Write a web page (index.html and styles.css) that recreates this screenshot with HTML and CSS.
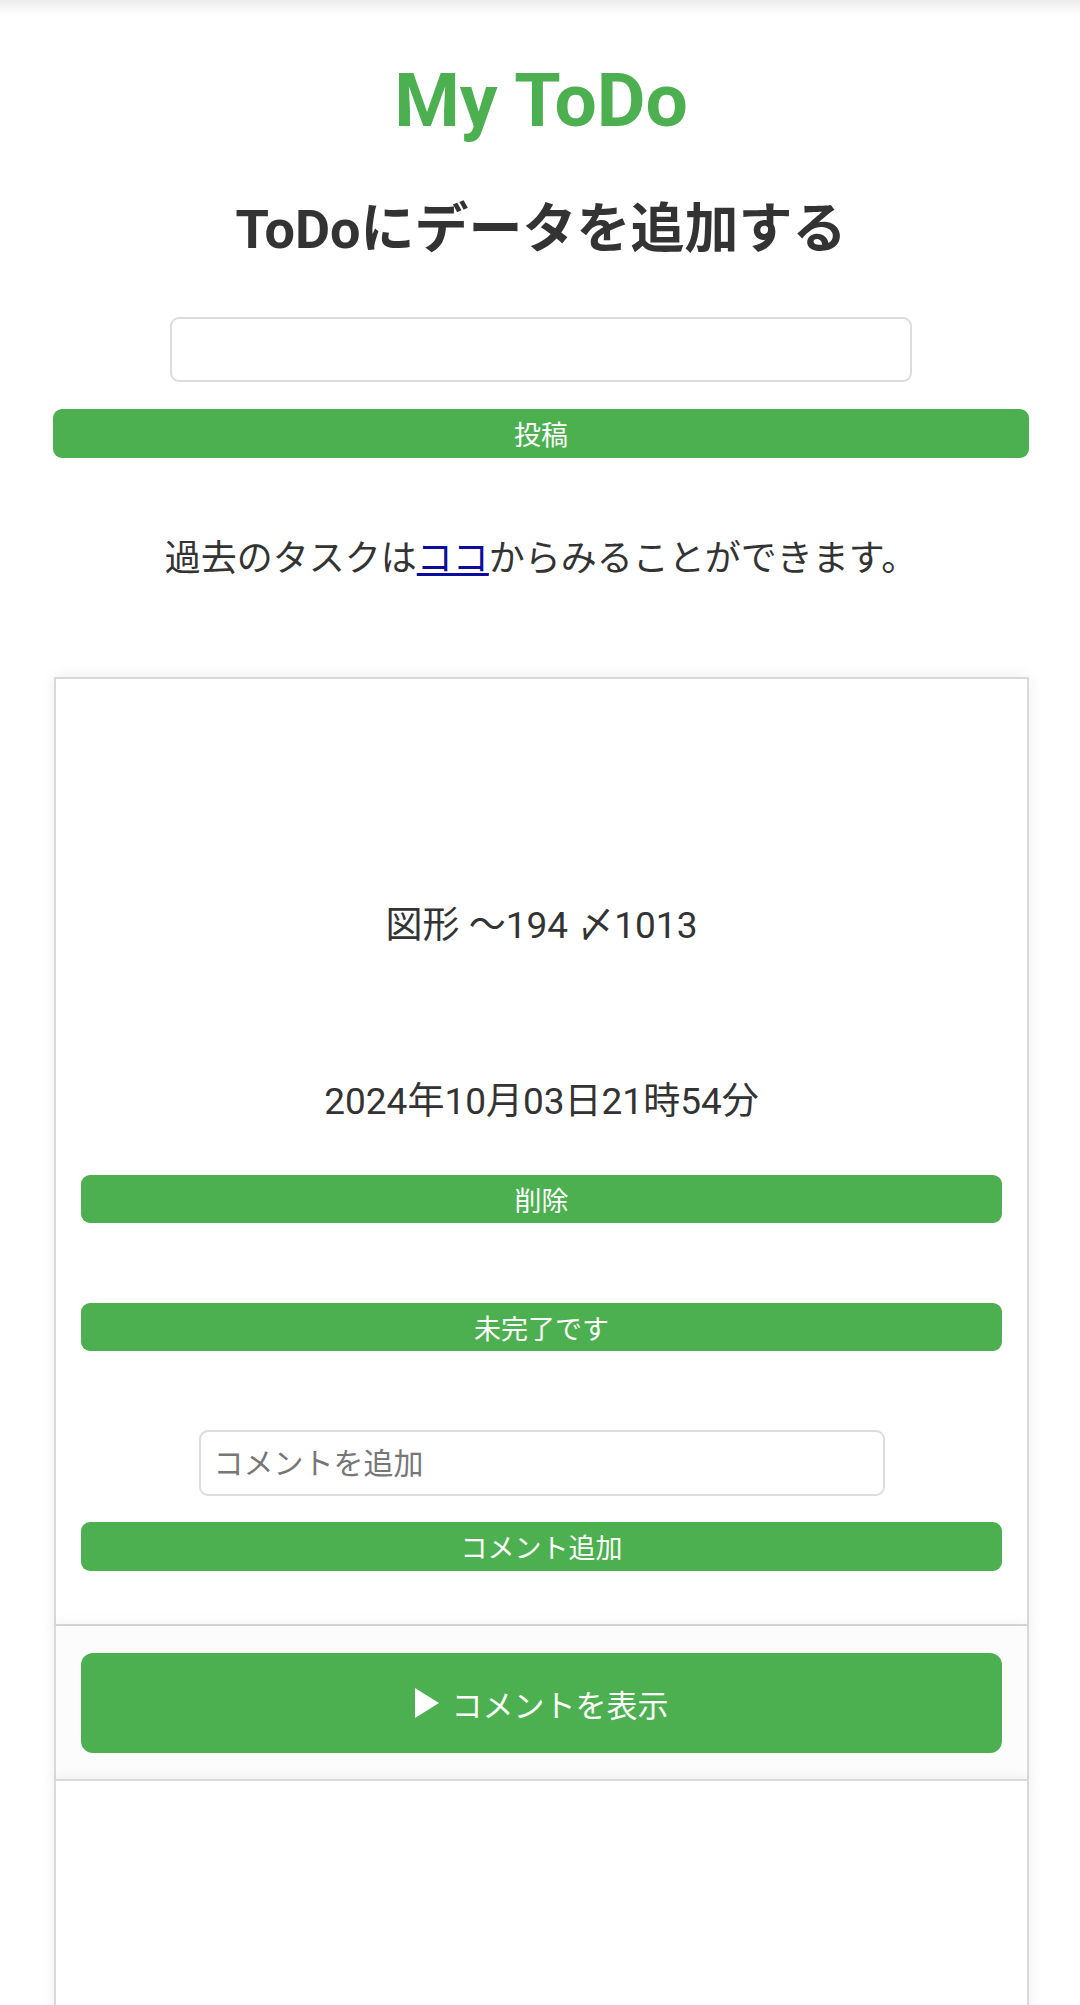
FILE: index.html
```html
<!DOCTYPE html>
<html lang="ja">
<head>
<meta charset="utf-8">
<title>My ToDo</title>
<link rel="stylesheet" href="styles.css">
</head>
<body>
<div class="top-shade"></div>
<main class="page">
  <h1 class="title">My ToDo</h1>
  <h2 class="subtitle">ToDoにデータを追加する</h2>
  <form class="add-form">
    <input class="text-input" type="text">
    <button class="btn" type="button">投稿</button>
  </form>
  <p class="history">過去のタスクは<a class="history-link" href="#">ココ</a>からみることができます。</p>

  <section class="todo-card">
    <p class="todo-text">図形 〜194 〆1013</p>
    <p class="todo-date">2024年10月03日21時54分</p>
    <button class="btn btn-delete" type="button">削除</button>
    <button class="btn btn-status" type="button">未完了です</button>
    <div class="comment-form">
      <input class="text-input comment-input" type="text" placeholder="コメントを追加">
      <button class="btn" type="button">コメント追加</button>
    </div>
  </section>
  <section class="comments-toggle">
    <button class="btn btn-large" type="button"><svg class="tri" width="24" height="30" viewBox="0 0 24 30"><path d="M0 0 L24 15 L0 30 Z" fill="#fff"/></svg><span>コメントを表示</span></button>
  </section>
  <section class="todo-card todo-card-next"></section>
</main>
</body>
</html>
```

FILE: styles.css
```css
html, body {
  margin: 0;
  padding: 0;
  background: #fff;
}
body {
  font-family: Roboto, "Noto Sans CJK JP", sans-serif;
  color: #333;
  overflow: hidden;
}
.top-shade {
  height: 14px;
  background: linear-gradient(#ebebeb, #ffffff);
}
.page {
  width: 976px;
  margin: 0 51px 0 53px;
}
.title {
  margin: 41px 0 0;
  font-size: 75px;
  line-height: 90px;
  font-weight: 700;
  color: #4caf50;
  text-align: center;
}
.subtitle {
  margin: 50px 0 0;
  font-size: 54px;
  line-height: 70px;
  font-weight: 700;
  color: #333;
  text-align: center;
}
.add-form {
  margin-top: 52px;
  display: flex;
  flex-direction: column;
  align-items: center;
  gap: 27px;
}
.text-input {
  box-sizing: border-box;
  width: 742px;
  height: 65px;
  border: 2px solid #dcdcdc;
  border-radius: 9px;
  padding: 0 13px;
  font-family: Roboto, "Noto Sans CJK JP", sans-serif;
  font-size: 30px;
  color: #333;
  background: #fff;
  outline: none;
}
.text-input::placeholder {
  color: #777;
}
.btn {
  box-sizing: border-box;
  width: 100%;
  height: 49px;
  border: none;
  border-radius: 9px;
  background: #4caf50;
  color: #fff;
  font-family: Roboto, "Noto Sans CJK JP", sans-serif;
  font-size: 27px;
  display: flex;
  align-items: center;
  justify-content: center;
  padding: 0;
}
.history {
  margin: 76px 0 0;
  font-size: 36px;
  line-height: 50px;
  text-align: center;
}
.history-link {
  color: #0c0c9c;
  text-decoration: underline;
}
.todo-card {
  margin-left: 1px;
  margin-top: 93px;
  border: 2px solid #d9d9d9;
  background: #fff;
  box-shadow: 0 0 14px rgba(0, 0, 0, 0.08);
  padding: 222px 25px 53px;
  display: flex;
  flex-direction: column;
  align-items: center;
}
.todo-text,
.todo-date {
  margin: 0;
  font-size: 37px;
  line-height: 50px;
  text-align: center;
}
.todo-date {
  margin-top: 126px;
}
.btn-delete {
  margin-top: 48px;
  height: 48px;
}
.btn-status {
  margin-top: 80px;
  height: 48px;
}
.comment-form {
  margin-top: 79px;
  width: 100%;
  display: flex;
  flex-direction: column;
  align-items: center;
  gap: 26px;
}
.comment-input {
  width: 686px;
  height: 66px;
}
.comments-toggle {
  margin-left: 1px;
  border: 2px solid #d9d9d9;
  border-top: none;
  border-bottom: none;
  background: #fcfcfc;
  box-shadow: 0 0 14px rgba(0, 0, 0, 0.08);
  padding: 27px 25px 26px;
}
.btn-large {
  height: 100px;
  border-radius: 12px;
  font-size: 31px;
  gap: 13px;
}
.tri {
  display: block;
}
.todo-card-next {
  margin-top: 0;
  height: 400px;
  padding: 0;
}
```
